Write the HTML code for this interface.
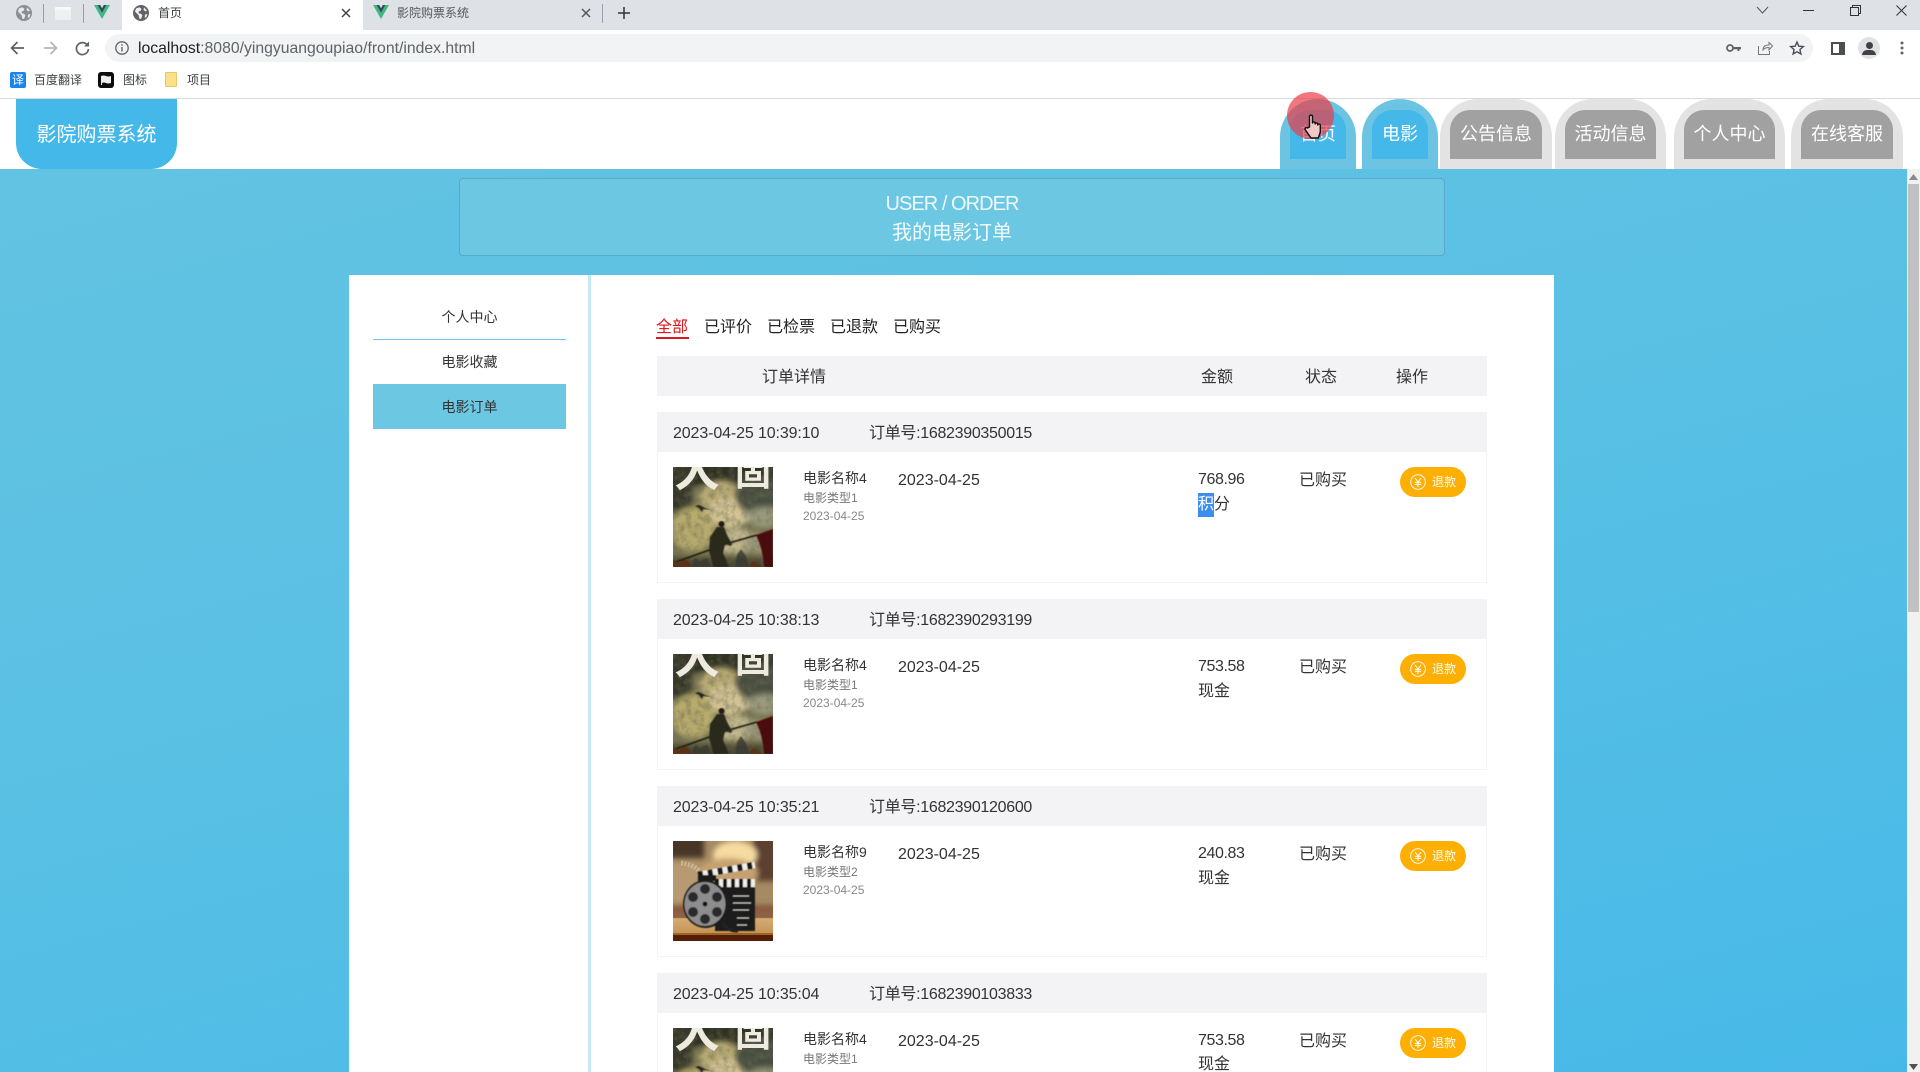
<!DOCTYPE html>
<html lang="zh-CN"><head><meta charset="utf-8"><title>影院购票系统</title>
<style>
*{box-sizing:border-box}
html,body{margin:0;padding:0;width:1920px;height:1072px;overflow:hidden;background:#fff}
body{position:relative;font-family:"Liberation Sans","Noto Sans CJK SC",sans-serif;color:#333}
.a{position:absolute}
.t{position:absolute;white-space:nowrap;line-height:20px;height:20px}
svg{position:absolute;overflow:visible}
.nav{position:absolute;top:99px;height:70px;border-radius:38px 38px 0 0}
.nav i{position:absolute;left:10px;right:10px;top:11px;height:49px;border-radius:20px 20px 0 0;font-style:normal;font-size:18px;color:#fff;text-align:center;line-height:48px;white-space:nowrap}
.b{background:#6cc4e2}.b i{background:#44b8e8}
.g{background:#e3e3e4}.g i{background:#a1a1a2}
.clip{position:absolute;left:0;top:0;width:1920px;height:1072px;overflow:hidden}
.o{position:absolute;left:657px;width:830px;height:171px;border:1px solid #f4f4f5;border-top:0;background:#fff}
.o .h{position:absolute;left:-1px;right:-1px;top:0;height:40px;background:#f3f3f5}
.d{font-size:16px;letter-spacing:-.12px}
.n{font-size:16px;letter-spacing:-.3px}
.btn{position:absolute;left:742px;top:55px;width:66px;height:30px;border-radius:15px;background:#fdaf04;color:#fff;font-size:12px;line-height:30px;padding-left:32px}
.btn svg{left:10px;top:7px}
</style></head>
<body>
<svg width="0" height="0" style="position:absolute">
<defs>
<filter id="bl"><feGaussianBlur stdDeviation="2.6"/></filter>
<filter id="bs"><feGaussianBlur stdDeviation=".45"/></filter>
<filter id="grain" x="0" y="0" width="100%" height="100%"><feTurbulence type="fractalNoise" baseFrequency=".16" numOctaves="3" seed="4"/><feColorMatrix values="0 0 0 0 .14 0 0 0 0 .14 0 0 0 0 .08 1.1 0 0 0 -.42"/></filter>
<clipPath id="cp"><rect width="100" height="100"/></clipPath>
<linearGradient id="w1" x1="0" y1="0" x2="0" y2="1"><stop offset="0" stop-color="#d6ad74"/><stop offset="1" stop-color="#c49458"/></linearGradient>
<symbol id="p1" viewBox="0 0 100 100" overflow="hidden">
<rect width="100" height="100" fill="#7a7650"/>
<g filter="url(#bl)" clip-path="url(#cp)">
<rect x="-5" y="-5" width="110" height="24" fill="#2f3024"/>
<rect x="-5" y="-5" width="24" height="50" fill="#38382a"/>
<ellipse cx="48" cy="32" rx="22" ry="18" fill="#b8aa74"/>
<ellipse cx="56" cy="46" rx="22" ry="15" fill="#d2c394"/>
<ellipse cx="86" cy="28" rx="24" ry="20" fill="#484f40"/>
<ellipse cx="92" cy="50" rx="18" ry="10" fill="#9a9a7e"/>
<ellipse cx="20" cy="62" rx="22" ry="22" fill="#b6aa6c"/>
<ellipse cx="62" cy="74" rx="24" ry="12" fill="#c2b88e"/>
<ellipse cx="88" cy="76" rx="16" ry="10" fill="#989478"/>
<rect x="-5" y="90" width="110" height="16" fill="#4c4630"/>
</g>
<rect width="100" height="100" filter="url(#grain)"/>
<text x="24" y="19" font-size="46" font-weight="700" fill="#eeeadf" text-anchor="middle" font-family="'Noto Sans CJK SC',sans-serif">大</text>
<text x="80" y="18" font-size="36" font-weight="700" fill="#eeeadf" text-anchor="middle" font-family="'Noto Sans CJK SC',sans-serif">固</text>
<g filter="url(#bs)">
<path d="M12 34l10 5 4-1 6 3 8 2-10-1-1 3-3-4-6-3z" fill="#26261c"/>
<path d="M0 96L56 76 84 68" stroke="#1e1a10" stroke-width="1.6" fill="none"/>
<path d="M83 68L100 62V100H91Q90 82 83 68z" fill="#4a0a10"/>
<circle cx="48.5" cy="57" r="3" fill="#211c12"/>
<path d="M44 60l7 0 3 8 5 9-1 2-6-2-2 9 6 14H40l-1-6-3-10 1-14z" fill="#2b2a1c"/>
<path d="M18 100l4-9 5 3 7-3 5 9zM62 100l2-12 4-6 5 7 3 11z" fill="#3a3a2e" opacity=".8"/>
<path d="M0 100v-7l6 3 6-4 6 5v3zM76 100l3-6 5 2 6 4z" fill="#5b3114"/>
</g>
</symbol>
<symbol id="p2" viewBox="0 0 100 100" overflow="hidden">
<rect width="100" height="100" fill="#a58a62"/>
<g filter="url(#bl)" clip-path="url(#cp)">
<rect x="-5" y="-5" width="36" height="22" fill="#463628"/>
<rect x="80" y="-5" width="26" height="45" fill="#5c4030"/>
<ellipse cx="62" cy="14" rx="22" ry="14" fill="#f6dca0"/>
<ellipse cx="55" cy="32" rx="30" ry="15" fill="#c6a070"/>
<rect x="-5" y="22" width="30" height="40" fill="#b79a72"/>
<rect x="-5" y="64" width="110" height="8" fill="#86583e"/>
</g>
<path d="M8 22q22 2 24 24" stroke="#d8c49a" stroke-width="5" fill="none" stroke-dasharray="2 1.5" opacity=".7"/>
<rect y="77" width="100" height="15" fill="url(#w1)"/>
<rect y="68" width="100" height="9" fill="#8d5c40" opacity=".85" filter="url(#bs)"/>
<rect y="92" width="100" height="2" fill="#a2621e"/>
<rect y="94" width="100" height="6" fill="#541f08"/>
<g filter="url(#bs)">
<rect x="42" y="38" width="40" height="52" fill="#1c1b1c"/>
<rect x="42" y="38" width="40" height="8" fill="#efeee8"/>
<path d="M42 42H82" stroke="#151515" stroke-width="8" stroke-dasharray="4 4" fill="none"/>
<path d="M25 34L82 24" stroke="#efeee8" stroke-width="6.5"/>
<path d="M25 34L82 24" stroke="#151515" stroke-width="6.5" stroke-dasharray="5 5"/>
<path d="M25 34v6h18v-6z" fill="#1c1b1c"/>
<path d="M60 55h16M60 62h18M60 69h16M64 77h12M64 84h10" stroke="#c8c8c0" stroke-width=".9"/>
<ellipse cx="32.5" cy="63" rx="22.5" ry="24" fill="#1d1c1c"/>
<ellipse cx="32" cy="63" rx="20.5" ry="22" fill="#8d8d8e"/>
<g fill="#2c2c2e"><circle cx="32" cy="48" r="5"/><circle cx="44" cy="56" r="5"/><circle cx="44" cy="71" r="5"/><circle cx="32" cy="78" r="5"/><circle cx="20" cy="71" r="5"/><circle cx="20" cy="56" r="5"/></g>
<circle cx="32" cy="63" r="2.4" fill="#111"/>
<path d="M50 82q6 9 15 8" stroke="#222" stroke-width="3" fill="none"/>
</g>
</symbol>
<symbol id="yen" viewBox="0 0 16 16"><circle cx="8" cy="8" r="7.3" fill="none" stroke="#fff" stroke-width=".9"/><path d="M5 4l3 4 3-4M4.8 8.4h6.4M4.8 10.4h6.4M8 8v5" fill="none" stroke="#fff" stroke-width="1"/></symbol>
<symbol id="vue" viewBox="0 0 16 16"><path d="M0 1h4.5L8 7l3.5-6H16L8 15z" fill="#41b883"/><path d="M3.6 1H6.2L8 4.2 9.8 1h2.6L8 8.6z" fill="#35495e"/></symbol>
<symbol id="globe" viewBox="0 0 16 16"><circle cx="8" cy="8" r="8" fill="#5f6368"/><path d="M3 3.5l3.5-1.2 2 1.7-1 2-2 .4.3 2 2.2.3 1.4 1.7-1.4 3.6-1.7-.4-.6-3.2L2 6.5zM11 2.5l3 3-1.6 1-1.8-1.6zM12 9.5l2.5-.5-1.2 3.4-1.6.3z" fill="#fff" opacity=".9"/></symbol>
</defs>
</svg>

<div class="clip">
<!-- tab strip -->
<div class="a" style="left:0;top:0;width:1920px;height:30px;background:#dee1e6"></div>
<svg style="left:16px;top:5px;opacity:.65" width="16" height="16"><use href="#globe"/></svg>
<div class="a" style="left:43px;top:4px;width:1px;height:19px;background:#9aa0a6"></div>
<div class="a" style="left:55px;top:7px;width:16px;height:13px;background:#eff0f1;border-top:3px solid #f8f8f8"></div>
<div class="a" style="left:83px;top:4px;width:1px;height:19px;background:#9aa0a6"></div>
<svg style="left:94px;top:4px" width="16" height="16"><use href="#vue"/></svg>
<div class="a" style="left:122px;top:0;width:241px;height:30px;background:#fff"></div>
<svg style="left:133px;top:5px" width="16" height="16"><use href="#globe"/></svg>
<div class="t" style="left:158px;top:3px;font-size:12px;color:#3c4043">首页</div>
<svg style="left:341px;top:8px" width="10" height="10"><path d="M1 1l8 8M9 1l-8 8" stroke="#444" stroke-width="1.5"/></svg>
<svg style="left:373px;top:4px" width="16" height="16"><use href="#vue"/></svg>
<div class="t" style="left:397px;top:3px;font-size:12px;color:#55585c">影院购票系统</div>
<svg style="left:581px;top:8px" width="10" height="10"><path d="M1 1l8 8M9 1l-8 8" stroke="#555" stroke-width="1.5"/></svg>
<div class="a" style="left:602px;top:4px;width:1px;height:19px;background:#9aa0a6"></div>
<svg style="left:618px;top:7px" width="12" height="12"><path d="M6 0v12M0 6h12" stroke="#333" stroke-width="1.5"/></svg>
<svg style="left:1756px;top:6px" width="13" height="8"><path d="M1 1l5.5 6L12 1" fill="none" stroke="#555" stroke-width="1"/></svg>
<div class="a" style="left:1803px;top:10px;width:11px;height:1px;background:#333"></div>
<svg style="left:1850px;top:5px" width="11" height="11"><path d="M2.5 2.5V.5h8v8h-2M.5 2.5h8v8h-8z" fill="none" stroke="#333"/></svg>
<svg style="left:1896px;top:5px" width="11" height="11"><path d="M.5.5l10 10M10.5.5l-10 10" stroke="#333"/></svg>

<!-- toolbar -->
<div class="a" style="left:105px;top:34px;width:1708px;height:28px;border-radius:14px;background:#f1f3f4"></div>
<svg style="left:10px;top:41px" width="15" height="14"><path d="M14 7H2M7.5 1L1.5 7l6 6" fill="none" stroke="#5f6368" stroke-width="1.7"/></svg>
<svg style="left:43px;top:41px" width="15" height="14"><path d="M1 7h12M7.5 1l6 6-6 6" fill="none" stroke="#b4b7bb" stroke-width="1.7"/></svg>
<svg style="left:75px;top:41px" width="15" height="14"><path d="M12.6 4.6A6 6 0 1 0 13.4 8" fill="none" stroke="#5f6368" stroke-width="1.7"/><path d="M9 5.5h5V.5z" fill="#5f6368"/></svg>
<svg style="left:115px;top:41px" width="14" height="14"><circle cx="7" cy="7" r="6.2" fill="none" stroke="#5f6368" stroke-width="1.3"/><path d="M7 6v4.5M7 3.3v1.5" stroke="#5f6368" stroke-width="1.4"/></svg>
<div class="t" style="left:138px;top:39px;font-size:15.75px;color:#5f6368"><span style="color:#202124">localhost</span>:8080/yingyuangoupiao/front/index.html</div>
<svg style="left:1726px;top:44px" width="15" height="8"><circle cx="4" cy="4" r="3" fill="none" stroke="#5f6368" stroke-width="1.7"/><path d="M7 3h8v2.2h-1.5V7h-2V5.2H7z" fill="#5f6368"/></svg>
<svg style="left:1758px;top:41px" width="15" height="14"><path d="M.5 5v8.5h11V10M5 9q0-5 6-5V1.5L14.5 5 11 9V6.5Q7 6.5 5 9z" fill="none" stroke="#777" stroke-width="1"/></svg>
<svg style="left:1790px;top:41px" width="14" height="14"><path d="M7 1l1.8 4.2 4.5.4-3.4 3 1 4.4L7 10.8 3.1 13l1-4.4-3.4-3 4.5-.4z" fill="none" stroke="#4a4d51" stroke-width="1.4"/></svg>
<div class="a" style="left:1831px;top:42px;width:14px;height:13px;border:2px solid #4a4d51;border-right-width:6px;background:#fff"></div>
<div class="a" style="left:1858px;top:37px;width:22px;height:22px;border-radius:50%;background:#e0e2e6;overflow:hidden"><div class="a" style="left:7.5px;top:5px;width:7px;height:7px;border-radius:50%;background:#3e4246"></div><div class="a" style="left:4px;top:12.5px;width:14px;height:5px;border-radius:5px 5px 0 0;background:#3e4246"></div></div>
<svg style="left:1900px;top:41px" width="4" height="14"><circle cx="2" cy="2" r="1.5" fill="#5f6368"/><circle cx="2" cy="7" r="1.5" fill="#5f6368"/><circle cx="2" cy="12" r="1.5" fill="#5f6368"/></svg>

<!-- bookmarks -->
<div class="a" style="left:10px;top:72px;width:16px;height:16px;border-radius:2px;background:#1a84ee;color:#fff;font-size:12px;line-height:16px;text-align:center">译</div>
<div class="t" style="left:34px;top:70px;font-size:12px;color:#3c4043">百度翻译</div>
<div class="a" style="left:98px;top:72px;width:16px;height:16px;border-radius:3px;background:#0c0c0c"><svg style="left:3px;top:3px" width="10" height="10"><path d="M0 1q2.5-1 5 0t5 0v7q-2.5 1-5 0t-4 0v2H0z" fill="#eee"/></svg></div>
<div class="t" style="left:123px;top:70px;font-size:12px;color:#3c4043">图标</div>
<div class="a" style="left:165px;top:72px;width:12px;height:15px;background:#fbe08a;border:1px solid #e9c766;border-radius:1px"></div>
<div class="t" style="left:187px;top:70px;font-size:12px;color:#3c4043">项目</div>
<div class="a" style="left:0;top:98px;width:1920px;height:1px;background:#d9dadc"></div>

<!-- page background -->
<div class="a" style="left:0;top:169px;width:1907px;height:903px;background:linear-gradient(165deg,#63c3e2 0%,#59c0e4 45%,#47b9e8 100%)"></div>

<!-- scrollbar -->
<div class="a" style="left:1907px;top:169px;width:13px;height:903px;background:#f1f1f1"></div>
<div class="a" style="left:1908px;top:184px;width:11px;height:428px;background:#c1c1c1"></div>
<svg style="left:1909px;top:174px" width="9" height="6"><path d="M4.5 0L9 6H0z" fill="#8a8a8a"/></svg>
<svg style="left:1909px;top:1064px" width="9" height="6"><path d="M4.5 6L9 0H0z" fill="#505050"/></svg>

<!-- header -->
<div class="a" style="left:16px;top:99px;width:161px;height:70px;background:#44b8e8;border-radius:0 0 26px 26px;color:#fff;font-size:20px;line-height:72px;text-align:center">影院购票系统</div>
<div class="nav b" style="left:1280px;width:76px"><i>首页</i></div>
<div class="nav b" style="left:1362px;width:76px"><i>电影</i></div>
<div class="nav g" style="left:1440px;width:112px"><i>公告信息</i></div>
<div class="nav g" style="left:1555px;width:111px"><i>活动信息</i></div>
<div class="nav g" style="left:1674px;width:111px"><i>个人中心</i></div>
<div class="nav g" style="left:1791px;width:112px"><i>在线客服</i></div>
<div class="a" style="left:1287px;top:92px;width:47px;height:47px;border-radius:50%;background:rgba(235,60,70,.7)"></div>
<svg style="left:1304px;top:114px" width="20" height="25" viewBox="0 0 20 25"><path d="M5.5 13V2.6c0-2 3-2 3 0V9c0-1.4 2.6-1.4 2.6 0v1c0-1.4 2.6-1.4 2.6 0v1c0-1.3 2.6-1.3 2.6 .2V18l-2 6H7L1.3 15.8c-1-1.6 1-3 2.2-1.8z" fill="#f0c8c8" stroke="#111" stroke-width="1.4" stroke-linejoin="round"/></svg>

<!-- banner -->
<div class="a" style="left:459px;top:178px;width:986px;height:78px;background:#6cc7e3;border:1px solid #5aa9c8;border-radius:4px"></div>
<div class="a" style="left:459px;top:192px;width:986px;text-align:center;color:#eef9fd;font-size:20px;line-height:24px;letter-spacing:-.95px">USER / ORDER</div>
<div class="a" style="left:459px;top:221px;width:986px;text-align:center;color:#f2fbfe;font-size:20px;line-height:24px">我的电影订单</div>

<!-- panels -->
<div class="a" style="left:349px;top:275px;width:1205px;height:797px;background:#fff"></div>
<div class="a" style="left:588px;top:275px;width:3px;height:797px;background:#c6e8f4"></div>
<div class="t" style="left:373px;top:307px;width:193px;text-align:center;font-size:14px">个人中心</div>
<div class="a" style="left:373px;top:339px;width:193px;height:1px;background:#6cc7e3"></div>
<div class="t" style="left:373px;top:352px;width:193px;text-align:center;font-size:14px">电影收藏</div>
<div class="a" style="left:373px;top:384px;width:193px;height:45px;background:#6cc7e3"></div>
<div class="t" style="left:373px;top:397px;width:193px;text-align:center;font-size:14px">电影订单</div>

<div class="t" style="left:656px;top:318px;font-size:16px;color:#e0161c">全部</div>
<div class="a" style="left:656px;top:337px;width:33px;height:1.5px;background:#d9191f"></div>
<div class="t" style="left:704px;top:318px;font-size:16px;color:#222">已评价</div>
<div class="t" style="left:767px;top:318px;font-size:16px;color:#222">已检票</div>
<div class="t" style="left:830px;top:318px;font-size:16px;color:#222">已退款</div>
<div class="t" style="left:893px;top:318px;font-size:16px;color:#222">已购买</div>

<div class="a" style="left:657px;top:356px;width:830px;height:40px;background:#f3f3f5"></div>
<div class="t" style="left:762px;top:368px;font-size:16px">订单详情</div>
<div class="t" style="left:1201px;top:368px;font-size:16px">金额</div>
<div class="t" style="left:1305px;top:368px;font-size:16px">状态</div>
<div class="t" style="left:1396px;top:368px;font-size:16px">操作</div>

<!-- order 1 -->
<div class="o" style="top:412px"><div class="h"></div>
<div class="t d" style="left:15px;top:12px">2023-04-25 10:39:10</div>
<div class="t n" style="left:211px;top:12px">订单号:1682390350015</div>
<svg style="left:15px;top:55px" width="100" height="100"><use href="#p1"/></svg>
<div class="t" style="left:145px;top:56px;font-size:14px">电影名称4</div>
<div class="t" style="left:145px;top:76px;font-size:12px;color:#777">电影类型1</div>
<div class="t" style="left:145px;top:94px;font-size:12px;color:#888">2023-04-25</div>
<div class="t" style="left:240px;top:59px;font-size:16px">2023-04-25</div>
<div class="t" style="left:540px;top:58px;font-size:16px;letter-spacing:-.4px">768.96</div>
<div class="t" style="left:540px;top:81px;font-size:16px;height:24px;line-height:24px"><span style="background:#3a8ef0;color:#fff;display:inline-block;height:24px">积</span>分</div>
<div class="t" style="left:641px;top:59px;font-size:16px">已购买</div>
<div class="btn"><svg width="16" height="16"><use href="#yen"/></svg>退款</div>
</div>

<!-- order 2 -->
<div class="o" style="top:599px"><div class="h"></div>
<div class="t d" style="left:15px;top:12px">2023-04-25 10:38:13</div>
<div class="t n" style="left:211px;top:12px">订单号:1682390293199</div>
<svg style="left:15px;top:55px" width="100" height="100"><use href="#p1"/></svg>
<div class="t" style="left:145px;top:56px;font-size:14px">电影名称4</div>
<div class="t" style="left:145px;top:76px;font-size:12px;color:#777">电影类型1</div>
<div class="t" style="left:145px;top:94px;font-size:12px;color:#888">2023-04-25</div>
<div class="t" style="left:240px;top:59px;font-size:16px">2023-04-25</div>
<div class="t" style="left:540px;top:58px;font-size:16px;letter-spacing:-.4px">753.58</div>
<div class="t" style="left:540px;top:81px;font-size:16px;height:24px;line-height:24px">现金</div>
<div class="t" style="left:641px;top:59px;font-size:16px">已购买</div>
<div class="btn"><svg width="16" height="16"><use href="#yen"/></svg>退款</div>
</div>

<!-- order 3 -->
<div class="o" style="top:786px"><div class="h"></div>
<div class="t d" style="left:15px;top:12px">2023-04-25 10:35:21</div>
<div class="t n" style="left:211px;top:12px">订单号:1682390120600</div>
<svg style="left:15px;top:55px" width="100" height="100"><use href="#p2"/></svg>
<div class="t" style="left:145px;top:56px;font-size:14px">电影名称9</div>
<div class="t" style="left:145px;top:76px;font-size:12px;color:#777">电影类型2</div>
<div class="t" style="left:145px;top:94px;font-size:12px;color:#888">2023-04-25</div>
<div class="t" style="left:240px;top:59px;font-size:16px">2023-04-25</div>
<div class="t" style="left:540px;top:58px;font-size:16px;letter-spacing:-.4px">240.83</div>
<div class="t" style="left:540px;top:81px;font-size:16px;height:24px;line-height:24px">现金</div>
<div class="t" style="left:641px;top:59px;font-size:16px">已购买</div>
<div class="btn"><svg width="16" height="16"><use href="#yen"/></svg>退款</div>
</div>

<!-- order 4 -->
<div class="o" style="top:973px;height:99px;border-bottom:0"><div class="h"></div>
<div class="t d" style="left:15px;top:12px">2023-04-25 10:35:04</div>
<div class="t n" style="left:211px;top:12px">订单号:1682390103833</div>
<svg style="left:15px;top:55px;overflow:hidden" width="100" height="44" viewBox="0 0 100 44"><use href="#p1" width="100" height="100"/></svg>
<div class="t" style="left:145px;top:56px;font-size:14px">电影名称4</div>
<div class="t" style="left:145px;top:76px;font-size:12px;color:#777">电影类型1</div>
<div class="t" style="left:240px;top:59px;font-size:16px">2023-04-25</div>
<div class="t" style="left:540px;top:58px;font-size:16px;letter-spacing:-.4px">753.58</div>
<div class="t" style="left:540px;top:79px;font-size:16px;height:20px;line-height:26px;overflow:hidden">现金</div>
<div class="t" style="left:641px;top:59px;font-size:16px">已购买</div>
<div class="btn"><svg width="16" height="16"><use href="#yen"/></svg>退款</div>
</div>
</div>
</body></html>
